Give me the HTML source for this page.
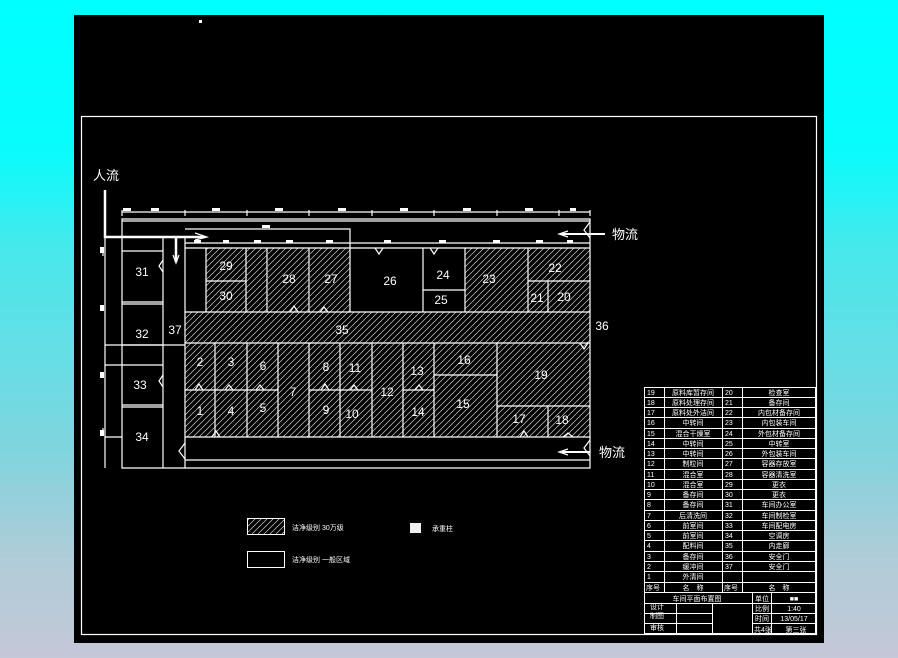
<!DOCTYPE html>
<html><head><meta charset="utf-8"><style>
html,body{margin:0;padding:0;width:898px;height:658px;overflow:hidden;
background:linear-gradient(to bottom,#00ffff 0px,#08fcfc 150px,#48e8ec 250px,#80d4de 450px,#b0ccd8 560px,#c4c8d8 658px);}
svg{position:absolute;left:0;top:0}
text{font-family:"Liberation Sans","Noto Sans CJK SC",sans-serif;fill:#fff}
</style></head><body>
<svg width="898" height="658" viewBox="0 0 898 658" xmlns="http://www.w3.org/2000/svg">
<defs>
<pattern id="h" patternUnits="userSpaceOnUse" width="6" height="6">
<path d="M-1,7 L7,-1 M-1,1 L1,-1 M5,7 L7,5" stroke="#cfcfcf" stroke-width="0.7"/>
</pattern>
</defs>
<rect x="74" y="15" width="750" height="628" fill="#000"/>
<rect x="81.5" y="116.5" width="735" height="518" fill="none" stroke="#fff" stroke-width="1.2"/>
<rect x="199" y="20" width="3" height="3" fill="#fff"/>

<g fill="url(#h)">
<rect x="206" y="248" width="40" height="64"/>
<rect x="246" y="248" width="21" height="64"/>
<rect x="268" y="248" width="41" height="64"/>
<rect x="310" y="248" width="40" height="64"/>
<rect x="465" y="248" width="125" height="64"/>
<rect x="185" y="312" width="405" height="31"/>
<rect x="185" y="343" width="405" height="94"/>
</g>

<g stroke="#fff" stroke-width="1.2" fill="none">
<path d="M105,190 V237 H205" stroke-width="2.5"/>
<path d="M105,237 V468"/>
<path d="M176,237 V262" stroke-width="2.5"/>
<path d="M173,255 L176,263 L179,255"/>
<path d="M195,233 L207,237 L195,240"/>
<path d="M122,212 H590 M122,210 V216 M185,210 V216 M247,210 V216 M309,210 V216 M372,210 V216 M434,210 V216 M497,210 V216 M559,210 V216 M590,210 V216"/>
<path d="M185,229 H350 V248"/>
<path d="M185,243 H590"/>
<path d="M122,219 H590 V468 H122 Z"/>
<path d="M122,221 H590"/>
<path d="M185,460 H590"/>
<path d="M163,237 V468 M185,237 V468"/>
<path d="M122,251 H163 M122,302 H163 M122,304 H163 M122,345 H163 M122,365 H163 M122,405 H163 M122,407 H163"/>
<path d="M105,365 H122 M105,345 H185 M105,437 H122"/>
<path d="M185,248 H590"/>
<path d="M206,248 V312 M246,248 V312 M267,248 V312 M309,248 V312 M350,248 V312 M423,248 V312 M465,248 V312 M528,248 V312"/>
<path d="M206,281 H246 M423,290 H465 M528,281 H590 M548,281 V312"/>
<path d="M185,312 H590 M185,343 H590"/>
<path d="M215,343 V437 M247,343 V437 M278,343 V437 M309,343 V437 M340,343 V437 M372,343 V437 M403,343 V437 M434,343 V437 M497,343 V437 M548,406 V437"/>
<path d="M185,390 H278 M309,390 H372 M403,390 H434 M434,375 H497 M497,406 H590 M185,437 H590"/>
<path d="M195,390 l4,-6 l4,6 M225,390 l4,-5 l4,5 M256,390 l4,-5 l4,5 M321,390 l4,-6 l4,6 M350,390 l4,-5 l4,5 M415,390 l4,-5 l4,5 M212,437 l4,-6 l4,6 M520,437 l4,-6 l4,6 M290,312 l4,-6 l4,6 M320,312 l4,-5 l4,5 M375,248 l4,6 l4,-6 M430,248 l4,6 l4,-6 M580,343 l4,6 l4,-6 M563,437 l5,-4 l5,4"/>
<path d="M590,222 l-6,8 l6,8 M590,440 l-6,8 l6,8 M185,443 l-6,8 l6,8 M163,260 l-4,6 l4,6 M163,375 l-4,6 l4,6"/>
<path d="M560,234 H605 M562,452 H590" stroke-width="2"/>
<path d="M568,231 L559,234 L568,237 M568,449 L559,452 L568,455"/>
<path d="M103,250 V256 M103,305 V311 M103,372 V378 M103,428 V434"/>
</g>
<g fill="#fff">
<rect x="123" y="208" width="8" height="3"/><rect x="151" y="208" width="8" height="3"/><rect x="212" y="208" width="8" height="3"/><rect x="275" y="208" width="8" height="3"/><rect x="338" y="208" width="8" height="3"/><rect x="400" y="208" width="8" height="3"/><rect x="463" y="208" width="8" height="3"/><rect x="525" y="208" width="8" height="3"/><rect x="570" y="208" width="6" height="3"/>
<rect x="262" y="225" width="8" height="3"/>
<rect x="194" y="240" width="7" height="3"/><rect x="223" y="240" width="6" height="3"/><rect x="254" y="240" width="7" height="3"/><rect x="286" y="240" width="7" height="3"/><rect x="326" y="240" width="7" height="3"/><rect x="384" y="240" width="7" height="3"/><rect x="439" y="240" width="7" height="3"/><rect x="493" y="240" width="7" height="3"/><rect x="536" y="240" width="7" height="3"/><rect x="567" y="240" width="6" height="3"/>
<rect x="100" y="247" width="4" height="6"/><rect x="100" y="305" width="4" height="6"/><rect x="100" y="372" width="4" height="6"/><rect x="100" y="430" width="4" height="6"/>
</g>

<g font-size="12" text-anchor="middle">
<text x="142" y="276">31</text><text x="142" y="338">32</text><text x="140" y="389">33</text><text x="142" y="441">34</text>
<text x="175" y="334">37</text><text x="342" y="334">35</text><text x="602" y="330">36</text>
<text x="226" y="270">29</text><text x="226" y="300">30</text><text x="289" y="283">28</text><text x="331" y="283">27</text>
<text x="390" y="285">26</text><text x="443" y="279">24</text><text x="441" y="304">25</text><text x="489" y="283">23</text>
<text x="555" y="272">22</text><text x="537" y="302">21</text><text x="564" y="301">20</text>
<text x="200" y="366">2</text><text x="231" y="366">3</text><text x="263" y="370">6</text><text x="293" y="396">7</text>
<text x="326" y="371">8</text><text x="355" y="372">11</text><text x="387" y="396">12</text><text x="417" y="375">13</text>
<text x="464" y="364">16</text><text x="541" y="379">19</text>
<text x="200" y="415">1</text><text x="231" y="415">4</text><text x="263" y="412">5</text><text x="326" y="414">9</text>
<text x="352" y="418">10</text><text x="418" y="416">14</text><text x="463" y="408">15</text><text x="519" y="423">17</text><text x="562" y="424">18</text>
</g>
<g font-size="13"><text x="93" y="180">人流</text><text x="612" y="239">物流</text><text x="599" y="457">物流</text></g>

<rect x="247.5" y="518.5" width="37" height="16" fill="url(#h)" stroke="#fff"/>
<rect x="247.5" y="551.5" width="37" height="16" fill="none" stroke="#fff"/>
<rect x="410" y="523" width="11" height="10" fill="#eee"/>
<g font-size="7"><text x="292" y="530">洁净级别 30万级</text><text x="292" y="562">洁净级别 一般区域</text><text x="432" y="531">承重柱</text></g>

<g stroke="#fff" stroke-width="1" fill="none">
<rect x="644.5" y="387.5" width="171" height="246"/>
<path d="M664.5,387 V593 M722.5,387 V593 M742.5,387 V593"/>
<path d="M645,397.5 H816 M645,407.5 H816 M645,417.5 H816 M645,428.5 H816 M645,438.5 H816 M645,448.5 H816 M645,458.5 H816 M645,469.5 H816 M645,479.5 H816 M645,489.5 H816 M645,499.5 H816 M645,510.5 H816 M645,520.5 H816 M645,530.5 H816 M645,540.5 H816 M645,551.5 H816 M645,561.5 H816 M645,571.5 H816 M645,582.5 H816 M645,592.5 H816 M645,603.5 H816"/>
<path d="M752.5,593 V634 M771.5,593 V634 M676.5,603 V634 M712.5,603 V634 M645,613.5 H712 M645,623.5 H712 M752,613.5 H816 M752,623.5 H816"/>
</g>
<g font-size="7">
<g text-anchor="start">
<text x="647" y="395">19</text><text x="647" y="405">18</text><text x="647" y="415">17</text><text x="647" y="425">16</text><text x="647" y="436">15</text><text x="647" y="446">14</text><text x="647" y="456">13</text><text x="647" y="466">12</text><text x="647" y="477">11</text><text x="647" y="487">10</text><text x="647" y="497">9</text><text x="647" y="507">8</text><text x="647" y="518">7</text><text x="647" y="528">6</text><text x="647" y="538">5</text><text x="647" y="548">4</text><text x="647" y="559">3</text><text x="647" y="569">2</text><text x="647" y="579">1</text><text x="646" y="590">序号</text>
<text x="725" y="395">20</text><text x="725" y="405">21</text><text x="725" y="415">22</text><text x="725" y="425">23</text><text x="725" y="436">24</text><text x="725" y="446">25</text><text x="725" y="456">26</text><text x="725" y="466">27</text><text x="725" y="477">28</text><text x="725" y="487">29</text><text x="725" y="497">30</text><text x="725" y="507">31</text><text x="725" y="518">32</text><text x="725" y="528">33</text><text x="725" y="538">34</text><text x="725" y="548">35</text><text x="725" y="559">36</text><text x="725" y="569">37</text><text x="724" y="590">序号</text>
</g>
<g text-anchor="middle">
<text x="693" y="395">原料库暂存间</text><text x="693" y="405">原料处理存间</text><text x="693" y="415">原料处外洁间</text><text x="693" y="425">中转间</text><text x="693" y="436">混合干燥室</text><text x="693" y="446">中转间</text><text x="693" y="456">中转间</text><text x="693" y="466">制粒间</text><text x="693" y="477">混合室</text><text x="693" y="487">混合室</text><text x="693" y="497">备存间</text><text x="693" y="507">备存间</text><text x="693" y="518">后清洗间</text><text x="693" y="528">前室间</text><text x="693" y="538">前室间</text><text x="693" y="548">配料间</text><text x="693" y="559">备存间</text><text x="693" y="569">缓冲间</text><text x="693" y="579">外清间</text><text x="693" y="590">名　称</text>
<text x="779" y="395">检查室</text><text x="779" y="405">备存间</text><text x="779" y="415">内包材备存间</text><text x="779" y="425">内包装车间</text><text x="779" y="436">外包材备存间</text><text x="779" y="446">中转室</text><text x="779" y="456">外包装车间</text><text x="779" y="466">容器存放室</text><text x="779" y="477">容器清洗室</text><text x="779" y="487">更衣</text><text x="779" y="497">更衣</text><text x="779" y="507">车间办公室</text><text x="779" y="518">车间制检室</text><text x="779" y="528">车间配电房</text><text x="779" y="538">空调房</text><text x="779" y="548">内走廊</text><text x="779" y="559">安全门</text><text x="779" y="569">安全门</text><text x="779" y="590">名　称</text>
<text x="697" y="601">车间平面布置图</text><text x="794" y="601">■■</text><text x="794" y="611">1:40</text><text x="794" y="621">13/05/17</text><text x="796" y="632">第三张</text>
</g>
<text x="755" y="601">单位</text><text x="755" y="611">比例</text><text x="755" y="621">时间</text><text x="754" y="632">共4张</text>
<text x="650" y="609">设计</text><text x="650" y="618">制图</text><text x="650" y="630">审核</text>
</g>
</svg>
</body></html>
